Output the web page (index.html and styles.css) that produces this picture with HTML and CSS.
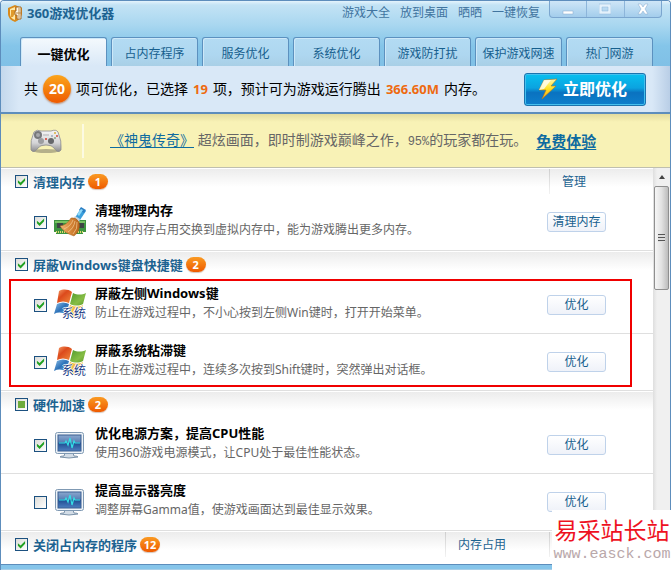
FILE: index.html
```
<!DOCTYPE html>
<html lang="zh-CN">

<head>
    <meta charset="UTF-8">
    <meta name="viewport" content="width=device-width, initial-scale=1.0">
    <title>360游戏优化器</title>
    <link rel="stylesheet" href="styles.css">
</head>

<body>
    <!-- Shared icons -->
    <svg class="sprite" width="0" height="0" aria-hidden="true">
        <defs>
            <linearGradient id="flagRed" x1="0" y1="0" x2="1" y2="1">
                <stop offset="0" stop-color="#f7a06a" />
                <stop offset="0.4" stop-color="#dc4a1c" />
                <stop offset="1" stop-color="#f08a3c" />
            </linearGradient>
            <linearGradient id="flagGreen" x1="0" y1="0" x2="1" y2="1">
                <stop offset="0" stop-color="#4f9a2c" />
                <stop offset="0.6" stop-color="#86bd45" />
                <stop offset="1" stop-color="#5b9a28" />
            </linearGradient>
            <linearGradient id="flagBlue" x1="0" y1="0" x2="1" y2="1">
                <stop offset="0" stop-color="#8dbfe8" />
                <stop offset="0.5" stop-color="#2d72b8" />
                <stop offset="1" stop-color="#7fb8e4" />
            </linearGradient>
            <linearGradient id="flagYellow" x1="0" y1="0" x2="1" y2="1">
                <stop offset="0" stop-color="#f0a820" />
                <stop offset="1" stop-color="#fbe27a" />
            </linearGradient>
            <linearGradient id="screen" x1="0" y1="0" x2="0" y2="1">
                <stop offset="0" stop-color="#8ba8cf" />
                <stop offset="0.45" stop-color="#5a7fb4" />
                <stop offset="0.5" stop-color="#1f4c92" />
                <stop offset="1" stop-color="#4c7fc0" />
            </linearGradient>
            <linearGradient id="bolt" x1="0" y1="0" x2="0" y2="1">
                <stop offset="0" stop-color="#fff9b0" />
                <stop offset="0.5" stop-color="#ffe21f" />
                <stop offset="1" stop-color="#f6a21c" />
            </linearGradient>
            <linearGradient id="pad" x1="0" y1="0" x2="0" y2="1">
                <stop offset="0" stop-color="#f6f6f6" />
                <stop offset="0.6" stop-color="#d4d4d6" />
                <stop offset="1" stop-color="#8a8a8d" />
            </linearGradient>
            <linearGradient id="broom" x1="0" y1="0" x2="1" y2="0">
                <stop offset="0" stop-color="#f0b878" />
                <stop offset="0.5" stop-color="#d98a3c" />
                <stop offset="1" stop-color="#b8651c" />
            </linearGradient>
        </defs>
        <symbol id="icon-flag" viewBox="0 0 32 32">
            <path d="M5 2 C9 0 14 0 18 3 L15 14 C11 12 7 12 3 14 Z" fill="url(#flagRed)" />
            <path d="M19 4 C23 6 28 6 32 4 L29 15 C25 17 20 17 16 15 Z" fill="url(#flagGreen)" />
            <path d="M3 15 C7 13 11 13 15 15 L12 26 C8 23 4 23 0 25 Z" fill="url(#flagBlue)" />
            <path d="M16 16 C20 18 25 18 29 16 L26 26 C22 28 17 29 13 26 Z" fill="url(#flagYellow)" />
        </symbol>
        <symbol id="icon-monitor" viewBox="0 0 32 32">
            <path d="M11 24 H19 L20 27 Q24 27 24 28 Q15 30 6 28 Q6 27 10 27 Z" fill="#d3dde7" stroke="#7c93aa" stroke-width="1" />
            <rect x="1.5" y="3.500" width="28" height="21" rx="2" fill="#eef3f8" stroke="#7f99b3" />
            <rect x="4" y="6" width="23" height="16" fill="url(#screen)" stroke="#3b5f90" stroke-width="1" />
            <path d="M5 14 H11 L12 12 L14 16 L16 9 L18 19 L20 12 L21 14 H26" fill="none" stroke="#35dfe6" stroke-width="1.200" />
        </symbol>
    </svg>

    <div class="window">
        <header class="titlebar">
            <div class="caption">
                <svg class="logo" width="16" height="17" viewBox="0 0 16 17">
                    <path d="M1 3 L8 0 L15 3 V9 Q14 14 8 17 Q1 14 1 9 Z" fill="#d98a1c" />
                    <path d="M3 4 L8 2 V15 Q3 13 3 9 Z" fill="#ffe9a8" />
                    <path d="M4 5 H8 V8 L6 12 H4 Z" fill="#e09a2c" />
                    <path d="M9 2 H14 V14 H10 V10 H8 V6 H9 Z" fill="#fff8e6" stroke="#a56a28" stroke-width="1" />
                    <path d="M12 3 V13 M9 8 H14" stroke="#b98a4c" stroke-width="1" />
                </svg>
                <h1>360游戏优化器</h1>
                <nav class="top-links">
                    <a href="#">游戏大全</a>
                    <a href="#">放到桌面</a>
                    <a href="#">晒晒</a>
                    <a href="#">一键恢复</a>
                </nav>
                <div class="controls">
                    <button type="button" aria-label="最小化">
                        <svg width="12" height="12" viewBox="0 0 12 12"><rect x="1" y="8" width="10" height="3" fill="#fff" stroke="#86a9cc" stroke-width="0.500" /></svg>
                    </button>
                    <button type="button" aria-label="最大化">
                        <svg width="12" height="12" viewBox="0 0 12 12"><path d="M0 1 H12 V11 H0 Z M3 4 V8 H9 V4 Z" fill="#e4f1fb" fill-rule="evenodd" stroke="#8db4da" stroke-width="0.500" /></svg>
                    </button>
                    <button type="button" aria-label="关闭">
                        <svg width="12" height="12" viewBox="0 0 12 12"><path d="M1 1 H4 L6 4 L8 1 H11 L8 6 L11 11 H8 L6 8 L4 11 H1 L4 6 Z" fill="#fff" stroke="#86a9cc" stroke-width="0.500" /></svg>
                    </button>
                </div>
            </div>
            <nav class="tabs">
                <button type="button" class="tab active">一键优化</button>
                <button type="button" class="tab">占内存程序</button>
                <button type="button" class="tab">服务优化</button>
                <button type="button" class="tab">系统优化</button>
                <button type="button" class="tab">游戏防打扰</button>
                <button type="button" class="tab">保护游戏网速</button>
                <button type="button" class="tab">热门网游</button>
            </nav>
        </header>

        <section class="summary">
            <p>共 <span class="total">20</span> 项可优化，已选择 <b>19</b> 项，预计可为游戏运行腾出 <b>366.60M</b> 内存。</p>
            <button type="button" class="run">
                <svg width="22" height="22" viewBox="0 0 22 22">
                    <path d="M7 2 L20 1 L14 8 L19 8 L5 21 L9 12 L2 12 Z" fill="url(#bolt)" stroke="#b5751c" stroke-width="0.600" />
                    <path d="M7 2 L14 2 L7 11 L2 12 Z" fill="#fff" opacity="0.750" />
                </svg>
                立即优化
            </button>
        </section>

        <section class="banner">
            <svg class="gamepad" width="34" height="28" viewBox="0 0 34 28">
                <ellipse cx="17" cy="24" rx="13" ry="2" fill="#b5b08a" />
                <path d="M5 5 Q8 2 12 4 H22 Q27 2 29 5 Q33 14 32 23 Q29 27 25 21 Q23 18 17 18 Q11 18 9 21 Q5 27 2 23 Q1 13 5 5 Z" fill="url(#pad)" stroke="#8b8b8d" stroke-width="0.800" />
                <circle cx="9" cy="8" r="4" fill="#77787b" />
                <circle cx="9" cy="8" r="2" fill="#a7a8ab" />
                <circle cx="12" cy="14" r="3" fill="#9c9da0" />
                <circle cx="22" cy="14" r="3" fill="#66676a" />
                <circle cx="26" cy="6" r="1" fill="#d8b23c" />
                <circle cx="28" cy="9" r="1" fill="#cf4a3c" />
                <circle cx="23" cy="9" r="1" fill="#9aaabb" />
                <circle cx="26" cy="11" r="1" fill="#8aa584" />
                <circle cx="17" cy="12" r="1" fill="#d63a2c" />
                <path d="M14 8 H20" stroke="#b0b1b4" stroke-width="1" />
            </svg>
            <p>
                <a href="#">《神鬼传奇》</a>
                超炫画面，即时制游戏巅峰之作，<span class="percent">95%</span>的玩家都在玩。
            </p>
            <a href="#" class="try">免费体验</a>
        </section>

        <main class="content">
            <div class="list">
                <section class="group">
                    <div class="group-head">
                        <input type="checkbox" id="g1" checked>
                        <label for="g1">清理内存</label>
                        <span class="count">1</span>
                        <div class="columns"><a href="#" class="column">管理</a></div>
                    </div>
                    <div class="item">
                        <input type="checkbox" id="i1" checked>
                        <div class="icon">
                            <svg width="32" height="32" viewBox="0 0 32 32">
                                <path d="M0 14 H32 V26 H29 V28 H2 V26 H0 Z" fill="#3d9440" />
                                <path d="M1 15 H31 V17 H1 Z" fill="#79c262" />
                                <path d="M3 17 H9 V22 H3 Z M24 17 H30 V22 H24 Z" fill="#3e4544" />
                                <path d="M2 26 H29" stroke="#e0d86c" stroke-width="2" stroke-dasharray="1 1" />
                                <path d="M19 15 L27 2 L32 5 L24 17 Z" fill="#3a9fdc" />
                                <path d="M18 15 L21 10 L26 13 L24 18 Z" fill="#c9d3da" />
                                <path d="M25 4 L27 1 L32 4 L30 7 Z" fill="#2b7fc4" />
                                <path d="M23 8 L27 3 L29 4 L25 10 Z" fill="#8fd8f8" />
                                <path d="M17 12 Q22 11 25 16 Q27 25 20 30 Q10 27 6 20 Q13 19 17 12 Z" fill="url(#broom)" stroke="#a5601c" stroke-width="0.500" />
                                <path d="M19 14 Q17 20 10 23 M21 15 Q20 22 14 26 M23 16 Q24 23 19 28" fill="none" stroke="#f6cf98" stroke-width="0.700" />
                            </svg>
                        </div>
                        <label for="i1" class="text">
                            <strong>清理物理内存</strong>
                            <span>将物理内存占用交换到虚拟内存中，能为游戏腾出更多内存。</span>
                        </label>
                        <button type="button" class="action">清理内存</button>
                    </div>
                </section>

                <section class="group highlighted">
                    <div class="group-head">
                        <input type="checkbox" id="g2" checked>
                        <label for="g2">屏蔽Windows键盘快捷键</label>
                        <span class="count">2</span>
                    </div>
                    <div class="item">
                        <input type="checkbox" id="i2" checked>
                        <div class="icon">
                            <svg width="32" height="32"><use href="#icon-flag" /></svg>
                            <span class="icon-label">系统</span>
                        </div>
                        <label for="i2" class="text">
                            <strong>屏蔽左侧Windows键</strong>
                            <span>防止在游戏过程中，不小心按到左侧Win键时，打开开始菜单。</span>
                        </label>
                        <button type="button" class="action">优化</button>
                    </div>
                    <div class="item">
                        <input type="checkbox" id="i3" checked>
                        <div class="icon">
                            <svg width="32" height="32"><use href="#icon-flag" /></svg>
                            <span class="icon-label">系统</span>
                        </div>
                        <label for="i3" class="text">
                            <strong>屏蔽系统粘滞键</strong>
                            <span>防止在游戏过程中，连续多次按到Shift键时，突然弹出对话框。</span>
                        </label>
                        <button type="button" class="action">优化</button>
                    </div>
                </section>

                <section class="group">
                    <div class="group-head">
                        <input type="checkbox" id="g3" class="partial">
                        <label for="g3">硬件加速</label>
                        <span class="count">2</span>
                    </div>
                    <div class="item">
                        <input type="checkbox" id="i4" checked>
                        <div class="icon">
                            <svg width="32" height="32"><use href="#icon-monitor" /></svg>
                        </div>
                        <label for="i4" class="text">
                            <strong>优化电源方案，提高CPU性能</strong>
                            <span>使用360游戏电源模式，让CPU处于最佳性能状态。</span>
                        </label>
                        <button type="button" class="action">优化</button>
                    </div>
                    <div class="item">
                        <input type="checkbox" id="i5">
                        <div class="icon">
                            <svg width="32" height="32"><use href="#icon-monitor" /></svg>
                        </div>
                        <label for="i5" class="text">
                            <strong>提高显示器亮度</strong>
                            <span>调整屏幕Gamma值，使游戏画面达到最佳显示效果。</span>
                        </label>
                        <button type="button" class="action">优化</button>
                    </div>
                </section>

                <section class="group">
                    <div class="group-head">
                        <input type="checkbox" id="g4" checked>
                        <label for="g4">关闭占内存的程序</label>
                        <span class="count">12</span>
                        <div class="columns">
                            <span class="column">内存占用</span>
                            <span class="column"></span>
                        </div>
                    </div>
                </section>
            </div>

            <div class="scrollbar">
                <span class="arrow"></span>
                <div class="thumb"><span class="grip"></span></div>
            </div>
        </main>
        <footer class="frame-bottom"></footer>
    </div>

    <aside class="watermark">
        <strong>易采站长站</strong>
        <span>www.easck.com</span>
    </aside>
</body>

</html>
```
FILE: styles.css
```
* {
    margin: 0;
    padding: 0;
    box-sizing: border-box;
}

body {
    font-family: "Noto Sans", "Noto Sans CJK SC", sans-serif;
    font-size: 12px;
    line-height: 16px;
    color: #666;
    background-color: #fff;
}

button {
    font: inherit;
    cursor: pointer;
}

.sprite {
    position: absolute;
}

.window {
    min-height: 100vh;
    display: flex;
    flex-direction: column;
    margin-right: 1px;
    border: 1px solid #5d8dbc;
    border-bottom: 0;
    border-radius: 4px 4px 0 0;
    overflow: hidden;
}

/* Title bar */
.titlebar {
    height: 65px;
    display: flex;
    flex-direction: column;
    justify-content: space-between;
    background: linear-gradient(#e4f3fc 0, #c3e3f5 4px, #a9d7f0 24px, #84c5e9 45px, #80c0e6 100%);
}

.caption {
    display: flex;
    align-items: flex-start;
    padding: 0 8px 0 6px;
}

.logo {
    margin-top: 4px;
}

.caption h1 {
    flex: 1;
    margin: 4px 0 0 4px;
    font-size: 13px;
    color: #1d6391;
}

.top-links {
    display: flex;
    gap: 10px;
    margin-top: 4px;
}

.top-links a {
    color: #41749f;
    text-decoration: none;
}

.controls {
    display: flex;
    width: 113px;
    height: 17px;
    margin-left: 9px;
    border: 1px solid #7ba6cf;
    border-top: 0;
    border-radius: 0 0 4px 4px;
    background: linear-gradient(#cfe6f7, #a3cdec);
    overflow: hidden;
}

.controls button {
    flex: 1;
    display: flex;
    align-items: center;
    justify-content: center;
    border: 0;
    background: none;
}

.controls button + button {
    border-left: 1px solid #8db5da;
}

/* Tabs */
.tabs {
    display: grid;
    grid-template-columns: repeat(7, 1fr);
    gap: 4px;
    padding: 0 17px 0 19px;
}

.tab {
    height: 29px;
    padding-top: 4px;
    border: 1px solid #5c91bf;
    border-bottom: 0;
    border-radius: 3px 3px 0 0;
    background: linear-gradient(#b3dbf3, #aed7f0 60%, #a9cfe6);
    box-shadow: inset 1px 1px #cde8f8;
    white-space: nowrap;
    color: #175f8e;
}

.tab.active {
    background: linear-gradient(#f4f9fd, #d9e8f7);
    font-size: 13px;
    font-weight: bold;
    color: #000;
}

/* Summary */
.summary {
    height: 46px;
    display: flex;
    align-items: center;
    justify-content: space-between;
    padding: 0 24px 0 23px;
    background: linear-gradient(90deg, #c4d8ec, #d9e8f7 18px, #d9e8f7 calc(100% - 18px), #b9cee6);
}

.summary p {
    display: flex;
    align-items: center;
    gap: 5px;
    font-size: 14px;
    color: #000;
    white-space: nowrap;
}

.summary b {
    font-size: 13px;
    color: #ee6a10;
}

.total {
    width: 28px;
    height: 28px;
    border-radius: 50%;
    background: linear-gradient(#fba51c, #ee5a00);
    box-shadow: 0 1px 2px #b98a6c;
    font-weight: bold;
    line-height: 28px;
    text-align: center;
    color: #fff;
}

.run {
    display: flex;
    align-items: center;
    gap: 4px;
    width: 122px;
    height: 33px;
    padding-left: 12px;
    border: 1px solid #1b74ae;
    border-radius: 3px;
    background: linear-gradient(#08c0ef, #0ba3e0 45%, #0a72c0 60%, #0d7fcc);
    box-shadow: inset 0 0 0 1px #45c0ee;
    font-size: 16px;
    font-weight: bold;
    white-space: nowrap;
    color: #fff;
}

/* Banner */
.banner {
    height: 56px;
    display: flex;
    align-items: center;
    border-top: 2px solid #5d8dbc;
    border-bottom: 1px solid #bfbfaf;
    background: linear-gradient(#e3dc9f, #f8f2b6 8px);
    padding-left: 28px;
    font-size: 14px;
    white-space: nowrap;
}

.banner p {
    margin-left: 19px;
    padding-left: 26px;
    border-left: 2px solid #fcfae2;
    line-height: 32px;
}

.banner a {
    color: #0e6ba0;
    text-underline-offset: 2px;
}

.percent {
    font-family: "Liberation Mono", monospace;
    font-size: 12px;
}

.banner .try {
    margin-left: 9px;
    font-size: 15px;
    font-weight: bold;
}

/* List */
.content {
    flex: 1;
    display: flex;
}

.list {
    flex: 1;
    background-color: #fff;
}

.group {
    position: relative;
}

.group-head {
    height: 26px;
    display: flex;
    align-items: center;
    padding-left: 14px;
    border-top: 1px solid #fff;
    background: linear-gradient(#ececec, #fff 18px);
}

.group-head label {
    margin-left: 5px;
    font-size: 13px;
    font-weight: bold;
    color: #1d6391;
}

.count {
    min-width: 20px;
    height: 15px;
    margin-left: 3px;
    padding: 0 3px;
    border-radius: 8px;
    background: linear-gradient(#fa9a22, #ee5a00);
    box-shadow: 0 1px 1px #d5c4b8;
    font-size: 11px;
    font-weight: bold;
    line-height: 15px;
    text-align: center;
    color: #fff;
}

.columns {
    display: flex;
    align-self: stretch;
    margin-left: auto;
}

.column {
    width: 104px;
    padding: 5px 0 0 12px;
    border-left: 1px solid;
    border-image: linear-gradient(#ccc, #f4f4f4) 1;
    color: #1d6391;
    text-decoration: none;
}

input[type="checkbox"] {
    appearance: none;
    width: 13px;
    height: 13px;
    display: grid;
    place-items: center;
    border: 1px solid #1c5180;
    background: linear-gradient(135deg, #dcdcd8, #fff);
}

input[type="checkbox"]:checked::before {
    content: "";
    width: 9px;
    height: 9px;
    background-color: #21a121;
    clip-path: polygon(10% 35%, 40% 62%, 90% 10%, 90% 42%, 40% 95%, 10% 65%);
}

input.partial::before {
    content: "";
    width: 7px;
    height: 7px;
    background-color: #6cab3c;
}

.item {
    height: 57px;
    display: flex;
    align-items: center;
    padding: 0 47px 0 33px;
    border-bottom: 1px solid #dfdfdf;
}

.icon {
    position: relative;
    width: 32px;
    height: 32px;
    margin: 0 9px 0 7px;
}

/* Caption over the lower part of the flag */
.icon-label {
    position: absolute;
    right: 0;
    bottom: 0;
    line-height: 14px;
    color: #1c3c86;
    text-shadow: 1px 0 #fff, -1px 0 #fff, 0 1px #fff, 0 -1px #fff;
}

.text {
    flex: 1;
    display: flex;
    flex-direction: column;
    gap: 4px;
    padding-bottom: 4px;
    white-space: nowrap;
}

.text strong {
    font-size: 13px;
    color: #000;
}

.action {
    width: 59px;
    height: 20px;
    border: 1px solid #bfd2ea;
    border-radius: 3px;
    background: linear-gradient(#fff, #eff2f9);
    line-height: 18px;
    color: #175f8e;
}

/* Red frame around the two items */
.highlighted::after {
    content: "";
    position: absolute;
    top: 28px;
    right: 21px;
    bottom: 4px;
    left: 8px;
    border: 2px solid #f00000;
    pointer-events: none;
}

/* Scrollbar */
.scrollbar {
    width: 17px;
    display: flex;
    flex-direction: column;
    align-items: center;
    background: linear-gradient(90deg, #dedede, #f0f0f0 4px);
}

.arrow {
    margin: 7px 0;
    border: 3px solid transparent;
    border-top: 0;
    border-bottom: 4px solid #444;
}

.thumb {
    width: 15px;
    height: 104px;
    display: flex;
    align-items: center;
    justify-content: center;
    border: 1px solid #8f8f8f;
    border-radius: 2px;
    background: linear-gradient(90deg, #f6f6f6, #e2e2e2 50%, #bcbcbc);
}

.grip {
    width: 7px;
    height: 8px;
    background: repeating-linear-gradient(#555 0 1px, #ddd 1px 3px);
}

.frame-bottom {
    height: 6px;
    border-top: 1px solid #5d8dbc;
    border-bottom: 1px solid #a9cfe8;
    background-color: #86c5ea;
}

/* Site mark in the corner */
.watermark {
    position: fixed;
    right: 0;
    bottom: 0;
    width: 120px;
    height: 60px;
    display: flex;
    flex-direction: column;
    align-items: center;
    padding-top: 5px;
    background-color: #fff;
    white-space: nowrap;
}

.watermark strong {
    font-family: "Noto Sans CJK SC", sans-serif;
    font-size: 23px;
    font-weight: normal;
    line-height: 28px;
    color: #ee1122;
}

.watermark span {
    font-family: "Liberation Mono", monospace;
    font-size: 15px;
    line-height: 24px;
    color: #b9a8aa;
}
```
